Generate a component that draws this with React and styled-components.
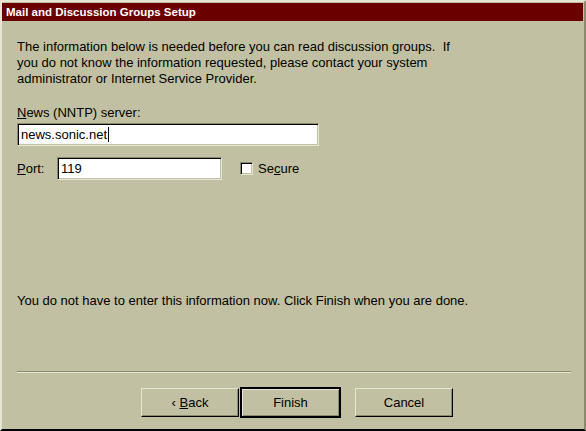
import React from 'react'
import styled, { createGlobalStyle } from 'styled-components'

const GlobalStyle = createGlobalStyle`
  html, body {
    margin: 0;
    padding: 0;
    background: #c1c0a2;
  }
  * {
    box-sizing: border-box;
  }
`

const Window = styled.div`
  width: 586px;
  height: 431px;
  display: flex;
  flex-direction: column;
  background: #c1c0a2;
  border-top: 2px solid #e6e6d6;
  border-left: 2px solid #e6e6d6;
  border-right: 2px solid #8a8a6c;
  border-bottom: 2px solid #000;
  font-family: "Liberation Sans", Arial, sans-serif;
  font-size: 13px;
  color: #000;
`

const TitleBar = styled.div`
  height: 18px;
  margin: 1px 1px 0 0;
  padding-left: 4px;
  display: flex;
  align-items: center;
  background: #6b0000;
  color: #fff;
  font-weight: bold;
  font-size: 11.5px;
`

const Body = styled.div`
  flex: 1;
  display: flex;
  flex-direction: column;
  padding: 18px 15px 0 15px;
`

const Intro = styled.p`
  margin: 0;
  line-height: 16px;
  width: 450px;
`

const FieldLabel = styled.div`
  margin-top: 18px;
  line-height: 16px;
`

const Key = styled.span`
  text-decoration: underline;
`

const TextBox = styled.div`
  width: ${({ $width }) => $width}px;
  height: 23px;
  display: flex;
  align-items: center;
  padding-left: 3px;
  background: #fff;
  border-top: 1px solid #8a8a6c;
  border-left: 1px solid #8a8a6c;
  border-right: 1px solid #e6e6d6;
  border-bottom: 1px solid #e6e6d6;
  box-shadow: inset 1px 1px 0 #000, inset -1px -1px 0 #c1c0a2;
`

const Caret = styled.span`
  display: inline-block;
  width: 1px;
  height: 15px;
  margin-left: 1px;
  background: #000;
`

const ServerRow = styled.div`
  margin-top: 2px;
`

const PortRow = styled.div`
  margin-top: 11px;
  display: flex;
  align-items: center;
`

const PortLabel = styled.span`
  width: 40px;
`

const CheckLabel = styled.label`
  margin-left: 18px;
  display: flex;
  align-items: center;
  gap: 5px;
`

const CheckBox = styled.span`
  width: 13px;
  height: 13px;
  background: #fff;
  border-top: 1px solid #8a8a6c;
  border-left: 1px solid #8a8a6c;
  border-right: 1px solid #e6e6d6;
  border-bottom: 1px solid #e6e6d6;
  box-shadow: inset 1px 1px 0 #000, inset -1px -1px 0 #c1c0a2;
`

const Spacer = styled.div`
  flex: 1;
`

const Note = styled.p`
  margin: 0 0 62px 0;
  line-height: 16px;
`

const Separator = styled.div`
  height: 2px;
  margin: 0 13px 0 15px;
  border-top: 1px solid #8a8a6c;
  border-bottom: 1px solid #e6e6d6;
`

const ButtonRow = styled.div`
  display: flex;
  padding: 15px 0 11px 139px;
`

const Button = styled.button`
  width: 98px;
  height: 29px;
  margin: 0;
  padding: 0;
  font-family: inherit;
  font-size: 13px;
  color: #000;
  background: #c1c0a2;
  border-top: 1px solid #e6e6d6;
  border-left: 1px solid #e6e6d6;
  border-right: 1px solid #000;
  border-bottom: 1px solid #000;
  box-shadow: inset -1px -1px 0 #8a8a6c;
  ${({ $default }) =>
    $default &&
    `
    width: 101px;
    height: 31px;
    margin: -1px 14px 0 1px;
    border: 2px solid #000;
    box-shadow: inset 1px 1px 0 #e6e6d6, inset -1px -1px 0 #8a8a6c;
  `}
`

export default function App() {
  return (
    <>
      <GlobalStyle />
      <Window>
        <TitleBar>Mail and Discussion Groups Setup</TitleBar>
        <Body>
          <Intro>
            The information below is needed before you can read discussion
            groups.&nbsp; If you do not know the information requested, please
            contact your system administrator or Internet Service Provider.
          </Intro>
          <FieldLabel>
            <Key>N</Key>ews (NNTP) server:
          </FieldLabel>
          <ServerRow>
            <TextBox $width={302}>
              news.sonic.net
              <Caret />
            </TextBox>
          </ServerRow>
          <PortRow>
            <PortLabel>
              <Key>P</Key>ort:
            </PortLabel>
            <TextBox $width={165}>119</TextBox>
            <CheckLabel>
              <CheckBox />
              <span>
                Se<Key>c</Key>ure
              </span>
            </CheckLabel>
          </PortRow>
          <Spacer />
          <Note>
            You do not have to enter this information now. Click Finish when
            you are done.
          </Note>
        </Body>
        <Separator />
        <ButtonRow>
          <Button>
            &lsaquo; <Key>B</Key>ack
          </Button>
          <Button $default>Finish</Button>
          <Button>Cancel</Button>
        </ButtonRow>
      </Window>
    </>
  )
}
